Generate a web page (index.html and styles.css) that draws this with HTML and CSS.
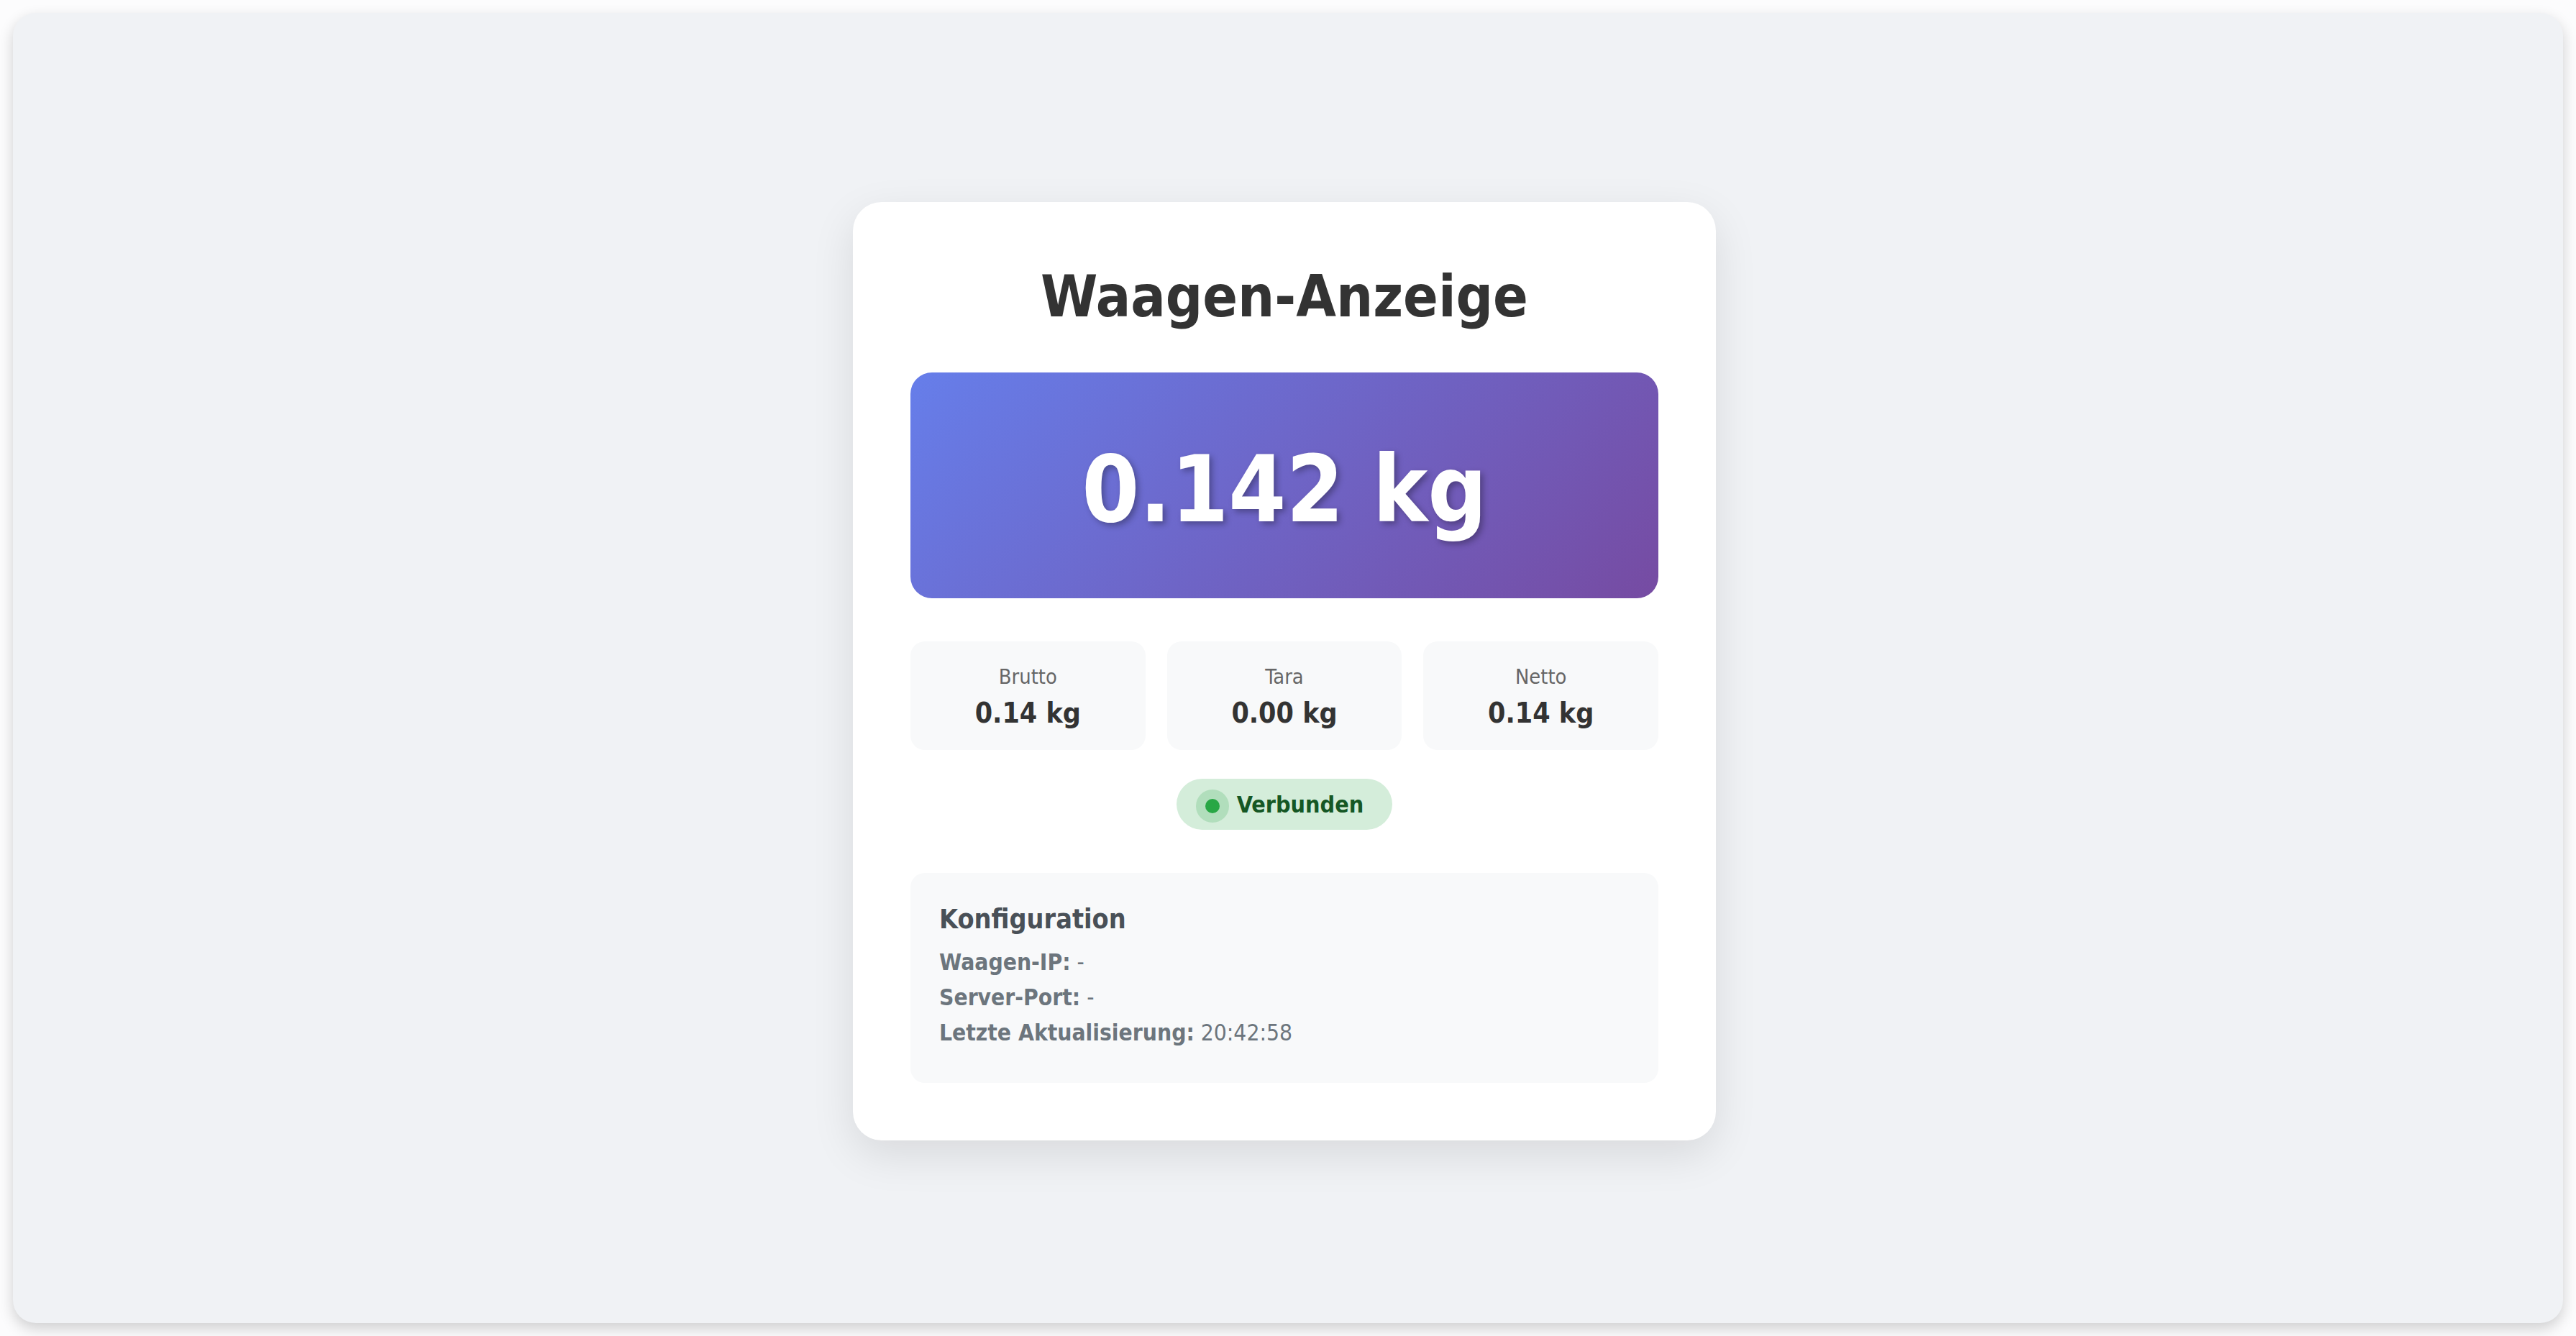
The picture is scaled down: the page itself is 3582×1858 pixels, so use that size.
FILE: index.html
```html
<!DOCTYPE html>
<html lang="de">
<head>
<meta charset="utf-8">
<title>Waagen-Anzeige</title>
<link rel="stylesheet" href="styles.css">
</head>
<body>
<div class="frame">
  <main class="card">
    <h1 class="title">Waagen-Anzeige</h1>
    <div class="weight-display">
      <span class="weight-value">0.142 kg</span>
    </div>
    <div class="details">
      <div class="detail">
        <div class="detail-label">Brutto</div>
        <div class="detail-value">0.14 kg</div>
      </div>
      <div class="detail">
        <div class="detail-label">Tara</div>
        <div class="detail-value">0.00 kg</div>
      </div>
      <div class="detail">
        <div class="detail-label">Netto</div>
        <div class="detail-value">0.14 kg</div>
      </div>
    </div>
    <div class="status-row">
      <div class="status">
        <span class="status-dot"></span>
        <span class="status-text">Verbunden</span>
      </div>
    </div>
    <section class="config">
      <h3 class="config-title">Konfiguration</h3>
      <p class="config-line"><strong>Waagen-IP:</strong> -</p>
      <p class="config-line"><strong>Server-Port:</strong> -</p>
      <p class="config-line"><strong>Letzte Aktualisierung:</strong> 20:42:58</p>
    </section>
  </main>
</div>
</body>
</html>
```
FILE: styles.css
```css
* {
  box-sizing: border-box;
}

html, body {
  margin: 0;
  height: 100%;
}

body {
  background: #fcfcfd;
  padding: 18px;
  font-family: "DejaVu Sans Condensed", "DejaVu Sans", sans-serif;
  font-stretch: condensed;
}

.frame {
  height: 100%;
  background: #f0f2f5;
  border-radius: 32px;
  box-shadow: 0 8px 20px rgba(0, 0, 0, 0.18);
  display: flex;
  align-items: center;
  justify-content: center;
  padding: 8px 10px 0 0;
}

.card {
  width: 1200px;
  background: #ffffff;
  border-radius: 40px;
  padding: 80px;
  box-shadow: 0 20px 60px rgba(0, 0, 0, 0.1);
}

.title {
  margin: 0 0 53px;
  font-size: 80px;
  line-height: 104px;
  font-weight: bold;
  color: #333333;
  text-align: center;
}

.weight-display {
  height: 314px;
  padding: 88px 20px 76px;
  border-radius: 30px;
  background: linear-gradient(135deg, #667eea 0%, #764ba2 100%);
  text-align: center;
}

.weight-value {
  display: block;
  font-size: 128px;
  line-height: 150px;
  font-weight: bold;
  color: #ffffff;
  text-shadow: 4px 4px 8px rgba(0, 0, 0, 0.3);
}

.details {
  margin-top: 60px;
  display: grid;
  grid-template-columns: repeat(3, 1fr);
  gap: 30px;
}

.detail {
  height: 151px;
  padding: 32px 20px 28px;
  border-radius: 20px;
  background: #f8f9fa;
  text-align: center;
}

.detail-label {
  font-size: 28.8px;
  line-height: 34px;
  color: #666666;
  margin-bottom: 10px;
}

.detail-value {
  font-size: 39px;
  line-height: 47px;
  font-weight: bold;
  color: #333333;
}

.status-row {
  margin-top: 40px;
  display: flex;
  justify-content: center;
}

.status {
  display: flex;
  align-items: center;
  gap: 24px;
  height: 71px;
  padding: 18px 40px 16px;
  border-radius: 999px;
  background: #d4edda;
  color: #155724;
}

.status-dot {
  width: 20px;
  height: 20px;
  border-radius: 50%;
  background: #28a745;
  box-shadow: 0 0 0 13px rgba(40, 167, 69, 0.2);
  margin-top: 3px;
}

.status-text {
  font-size: 32px;
  line-height: 37px;
  font-weight: bold;
}

.config {
  margin-top: 60px;
  height: 292px;
  padding: 42px 40px 40px;
  border-radius: 20px;
  background: #f8f9fa;
}

.config-title {
  margin: 0 0 14px;
  font-size: 37.44px;
  line-height: 44px;
  font-weight: bold;
  color: #495057;
}

.config-line {
  margin: 0;
  font-size: 31.5px;
  line-height: 49px;
  color: #6c757d;
}

.config-line strong {
  font-weight: bold;
}
```
